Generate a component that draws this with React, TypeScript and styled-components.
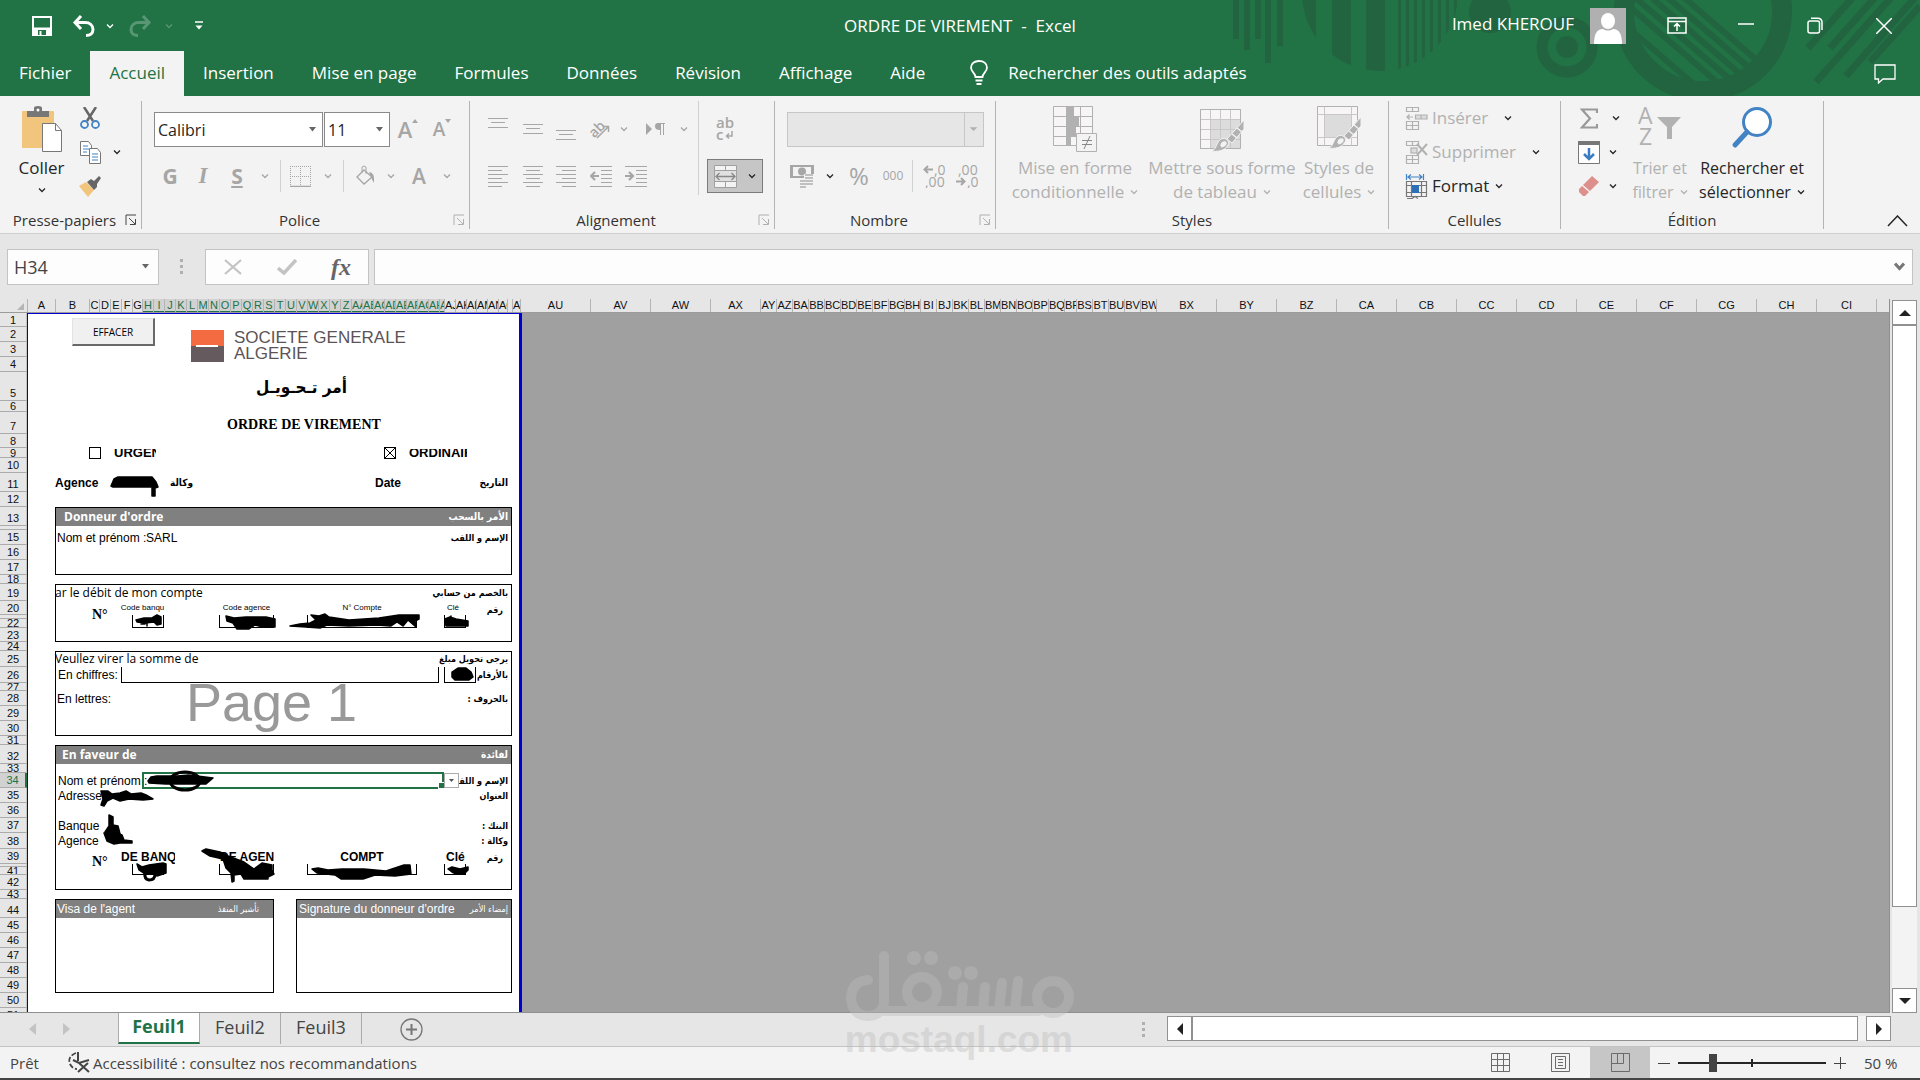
import React from 'react';
import styled, { createGlobalStyle, css } from 'styled-components';

const UI = '"Open Sans", "Noto Sans", sans-serif';
const CELL = '"Liberation Sans", Arial, sans-serif';
const ARABIC = '"DejaVu Sans Condensed", "DejaVu Sans", sans-serif';
const GREEN = '#217346';

const GlobalStyle = createGlobalStyle`
  *, *::before, *::after { box-sizing: border-box; }
  body { margin: 0; font-family: ${UI}; color: #262626; }
  button, input, select { font: inherit; color: inherit; margin: 0; padding: 0; border: 0; background: none; }
  svg { display: block; flex: none; }
`;

const Window = styled.div`
  display: flex;
  flex-direction: column;
  height: 100vh;
  overflow: hidden;
  position: relative;
  background: #e6e6e6;
  border-bottom: 2px solid #444;
`;

/* ---------- title bar and tabs ---------- */

const Header = styled.header`
  position: relative;
  background: ${GREEN};
  color: #fff;
  flex: none;
`;

const Pattern = styled.svg`
  position: absolute;
  top: 0;
  right: 0;
`;

const TitleBar = styled.div`
  position: relative;
  display: grid;
  grid-template-columns: 1fr auto 1fr;
  align-items: center;
  height: 51px;
`;

const QuickAccess = styled.div`
  display: flex;
  align-items: center;
  padding-left: 25px;
`;

const DocTitle = styled.h1`
  margin: 0;
  font-size: 17px;
  line-height: 24px;
  font-weight: 400;
  white-space: pre;
`;

const WindowControls = styled.div`
  display: flex;
  align-items: center;
  justify-content: flex-end;
`;

const UserName = styled.span`
  font-size: 17px;
  line-height: 24px;
  margin: 0 16px 4px 0;
`;

const Slot = styled.button<{ $w: number; $h?: number; $faded?: boolean }>`
  display: flex;
  align-items: center;
  justify-content: center;
  width: ${(p) => p.$w}px;
  height: ${(p) => p.$h ?? 34}px;
  flex: none;
  opacity: ${(p) => (p.$faded ? 0.25 : 1)};
`;

const TabRow = styled.nav`
  position: relative;
  display: flex;
  align-items: stretch;
  height: 45px;
  font-size: 17px;
  line-height: 24px;
`;

const Tab = styled.button<{ $active?: boolean }>`
  padding: 0 19px 2px;
  ${(p) => p.$active && css`background: #f3f3f3; color: ${GREEN};`}
`;

const TellMe = styled.button`
  display: flex;
  align-items: center;
  gap: 20px;
  padding: 0 0 2px 26px;
`;

const CommentButton = styled.button`
  margin-left: auto;
  padding-right: 24px;
`;

/* ---------- ribbon ---------- */

const Ribbon = styled.section`
  display: flex;
  height: 138px;
  padding: 5px 0 4px;
  background: #f3f3f3;
  border-bottom: 1px solid #d0d0d0;
  flex: none;
`;

const Group = styled.div<{ $w: number }>`
  display: flex;
  flex-direction: column;
  flex: none;
  width: ${(p) => p.$w}px;
  border-right: 1px solid #b4b4b4;
`;

const GroupBody = styled.div<{ $pad?: number }>`
  display: flex;
  height: 110px;
  padding-left: ${(p) => p.$pad ?? 0}px;
`;

const GroupFooter = styled.div`
  display: flex;
  align-items: center;
  height: 18px;
  padding: 0 4px;
  font-size: 15px;
  color: #333;
`;

const FooterLabel = styled.span`
  flex: 1;
  text-align: center;
`;

const Launcher = styled.button<{ $dim?: boolean }>`
  color: ${(p) => (p.$dim ? '#b0b0b0' : '#444')};
`;

const Rows = styled.div`
  display: flex;
  flex-direction: column;
  gap: 13px;
  padding-top: 11px;
`;

const Row = styled.div`
  display: flex;
  align-items: center;
  height: 34px;
  color: #a6a6a6;
`;

const VerticalRule = styled.i<{ $m: number; $h?: number }>`
  flex: none;
  width: 1px;
  height: ${(p) => p.$h ?? 32}px;
  margin: 0 ${(p) => p.$m}px;
  background: #d0d0d0;
`;

const BigButton = styled.button<{ $w: number; $dim?: boolean; $size?: number }>`
  display: flex;
  flex-direction: column;
  align-items: center;
  flex: none;
  width: ${(p) => p.$w}px;
  padding-top: 5px;
  font-size: ${(p) => p.$size ?? 17}px;
  line-height: 24px;
  white-space: nowrap;
  color: ${(p) => (p.$dim ? '#b1b1b1' : '#262626')};
`;

const BigIcon = styled.span`
  display: flex;
  align-items: flex-start;
  justify-content: center;
  height: 50px;
`;

const WithChevron = styled.span`
  display: flex;
  align-items: center;
  gap: 6px;
`;

const Stack = styled.div<{ $row: number }>`
  display: grid;
  grid-auto-rows: ${(p) => p.$row}px;
  align-content: start;
`;

const StackRow = styled.div`
  display: flex;
  align-items: center;
`;

const CellsButton = styled.button<{ $dim?: boolean; $gap: number }>`
  display: flex;
  align-items: center;
  font-size: 17px;
  line-height: 24px;
  color: ${(p) => (p.$dim ? '#b1b1b1' : '#262626')};
  span { margin: 0 ${(p) => p.$gap}px 0 4px; }
`;

const SelectFrame = styled.span<{ $w: number; $dim?: boolean }>`
  display: grid;
  grid-template-columns: 1fr 19px;
  align-items: center;
  justify-items: center;
  width: ${(p) => p.$w}px;
  height: 35px;
  background: ${(p) => (p.$dim ? '#e6e6e6' : '#fff')};
  border: 1px solid ${(p) => (p.$dim ? '#c6c6c6' : '#8a8a8a')};
  color: ${(p) => (p.$dim ? '#b1b1b1' : '#666')};
  svg { grid-area: 1 / 2; pointer-events: none; }
`;

const Select = styled.select`
  appearance: none;
  grid-area: 1 / 1 / 2 / 3;
  width: 100%;
  height: 33px;
  padding: 2px 0 0 3px;
  font-size: 16px;
  color: #262626;
  outline: none;
`;

const DividedSelect = styled(SelectFrame)`
  svg { width: 19px; height: 33px; border-left: 1px solid #c6c6c6; }
`;

const Glyph = styled.span<{ $size: number; $weight?: number; $italic?: boolean; $underline?: boolean; $serif?: boolean }>`
  font-size: ${(p) => p.$size}px;
  line-height: 24px;
  font-family: ${(p) => (p.$serif ? '"Liberation Serif", serif' : UI)};
  font-weight: ${(p) => p.$weight ?? 400};
  font-style: ${(p) => (p.$italic ? 'italic' : 'normal')};
  text-decoration: ${(p) => (p.$underline ? 'underline' : 'none')};
`;

const MergeButton = styled.button`
  display: flex;
  align-items: center;
  justify-content: space-around;
  width: 56px;
  height: 34px;
  background: #c6c6c6;
  border: 1px solid #7b7b7b;
  color: #262626;
`;

const CollapseArea = styled.div`
  display: flex;
  flex: 1;
  align-items: flex-end;
  justify-content: flex-end;
  padding: 0 12px 2px 0;
`;

/* ---------- formula bar ---------- */

const FormulaBar = styled.div`
  display: flex;
  align-items: center;
  height: 65px;
  padding: 0 7px;
  flex: none;
`;

const Field = styled.div<{ $w?: number }>`
  display: flex;
  align-items: center;
  height: 36px;
  background: #fdfdfd;
  border: 1px solid #c3c3c3;
  color: #666;
  ${(p) => (p.$w ? `width: ${p.$w}px; flex: none;` : 'flex: 1;')}
`;

const NameInput = styled.input`
  flex: 1;
  min-width: 0;
  padding-left: 6px;
  font-size: 18px;
  color: #444;
  outline: none;
`;

const FormulaInput = styled.input`
  flex: 1;
  height: 32px;
  outline: none;
`;

const Dots = styled.span`
  display: grid;
  align-self: center;
  gap: 3px;
  margin: 0 22px 0 21px;
  i { width: 3px; height: 3px; background: #b0b0b0; }
`;

/* ---------- worksheet ---------- */

const Workspace = styled.main`
  display: flex;
  flex: 1;
  min-height: 0;
`;

const Sheet = styled.div`
  display: flex;
  flex-direction: column;
  flex: 1;
  min-width: 0;
  border-right: 1px solid #8f8f8f;
  border-bottom: 1px solid #8f8f8f;
`;

const ColumnHeads = styled.div`
  display: flex;
  height: 14px;
  flex: none;
  font: 11px/13px ${CELL};
  color: #111;
  border-bottom: 1px solid #9b9b9b;
`;

const Corner = styled.button`
  display: flex;
  align-items: flex-end;
  justify-content: flex-end;
  width: 28px;
  padding: 0 3px 2px 0;
  flex: none;
  color: #b5b5b5;
  border-right: 1px solid #b5b5b5;
`;

const ColumnHead = styled.div<{ $w: number; $on?: boolean }>`
  flex: none;
  width: ${(p) => p.$w}px;
  overflow: hidden;
  text-align: center;
  border-right: 1px solid #b5b5b5;
  ${(p) => p.$on && css`background: #d2d2d2; color: ${GREEN}; box-shadow: inset 0 -1px ${GREEN};`}
`;

const SheetBody = styled.div`
  display: flex;
  flex: 1;
  min-height: 0;
  overflow: hidden;
  background: #a0a0a0;
`;

const RowHeads = styled.div`
  width: 27px;
  flex: none;
  background: #e6e6e6;
  font: 11px/12px ${CELL};
  color: #111;
`;

const RowHead = styled.div<{ $h: number; $on?: boolean }>`
  display: flex;
  align-items: ${(p) => (p.$h > 16 ? 'flex-end' : 'center')};
  justify-content: center;
  height: ${(p) => p.$h}px;
  padding-bottom: ${(p) => (p.$h > 16 ? 1 : 0)}px;
  overflow: hidden;
  border-bottom: 1px solid #ababab;
  border-right: 1px solid #c3c3c3;
  ${(p) => p.$on && css`background: #d2d2d2; color: ${GREEN}; border-right: 2px solid ${GREEN};`}
`;

const rowHeights = [
  14, 15, 15, 15, 29, 11, 22, 14, 10, 15, 19, 15, 19, 4, 15, 15, 15, 9, 17, 14, 4, 9, 14, 9, 16, 16, 8, 15, 15, 15, 9,
  19, 9, 15, 15, 15, 15, 16, 15, 3, 8, 15, 9, 19, 15, 15, 15, 15, 15, 15, 15,
];

const sheetRows = rowHeights.map((h, i) => `${i === 0 ? h - 1 : h}px`).join(' ');

const Page = styled.div`
  position: relative;
  display: grid;
  flex: none;
  align-content: start;
  grid-template-columns: 27px 34px 10px 11px 11px 11px 10px repeat(19, 11px) repeat(8, 11px) 5px 11px 11px 10px 11px 11px 9px 5px 7px;
  grid-template-rows: ${sheetRows};
  background: #fff;
  border: solid #0000d0;
  border-width: 1px 3px 0 1px;
  font: 12px/14px ${CELL};
  color: #000;
`;

type Area = { $r: string; $c: string };

const area = css<Area>`
  grid-row: ${(p) => p.$r};
  grid-column: ${(p) => p.$c};
`;

const Box = styled.div<Area & { $open?: boolean }>`
  ${area}
  border: 1px solid #000;
  ${(p) => p.$open && 'border-top: 0;'}
`;

const Band = styled.div<Area>`
  ${area}
  background: #808080;
  border: 1px solid #000;
  border-bottom: 0;
`;

const Cell = styled.div<Area & { $size?: number; $bold?: boolean; $ui?: boolean; $white?: boolean; $center?: boolean; $pad?: number; $clip?: boolean }>`
  ${area}
  display: flex;
  align-items: center;
  justify-content: ${(p) => (p.$center ? 'center' : 'flex-start')};
  padding-left: ${(p) => p.$pad ?? 0}px;
  font-size: ${(p) => p.$size ?? 12}px;
  font-weight: ${(p) => (p.$bold ? 700 : 400)};
  font-family: ${(p) => (p.$ui ? UI : CELL)};
  color: ${(p) => (p.$white ? '#fff' : '#000')};
  white-space: nowrap;
  overflow: ${(p) => (p.$clip ? 'hidden' : 'visible')};
  z-index: 1;
`;

const ArabicCell = styled.div<Area & { $size?: number; $white?: boolean; $light?: boolean }>`
  ${area}
  display: flex;
  align-items: center;
  justify-content: flex-start;
  direction: rtl;
  padding-right: 4px;
  font: ${(p) => (p.$light ? 400 : 700)} ${(p) => p.$size ?? 9}px/14px ${ARABIC};
  color: ${(p) => (p.$white ? '#fff' : '#000')};
  white-space: nowrap;
  z-index: 1;
`;

const SerifCell = styled(Cell)`
  font-family: 'Liberation Serif', 'Times New Roman', serif;
`;

const ClearButton = styled.button`
  grid-row: 1 / 4;
  grid-column: 2 / 10;
  align-self: start;
  width: 83px;
  height: 28px;
  margin: 4px 0 0 17px;
  font: 10px/14px ${UI};
  background: #f0f0f0;
  border: 1px solid #e3e3e3;
  border-right: 2px solid #696969;
  border-bottom: 2px solid #696969;
`;

const BankLogo = styled.div`
  grid-row: 1 / 5;
  grid-column: 11 / 35;
  display: flex;
  align-items: center;
  gap: 10px;
  padding: 5px 0 0 16px;
  font: 17px/16px ${CELL};
  color: #5c5356;
  white-space: nowrap;
`;

const Tick = styled.label<Area>`
  ${area}
  display: flex;
  align-items: center;
  gap: 13px;
  overflow: visible;
  input {
    appearance: none;
    flex: none;
    width: 12px;
    height: 12px;
    border: 1px solid #000;
  }
  input:checked {
    background: linear-gradient(45deg, transparent 46%, #000 46%, #000 54%, transparent 54%),
      linear-gradient(-45deg, transparent 46%, #000 46%, #000 54%, transparent 54%);
  }
`;

const Cropped = styled.span<{ $w: number }>`
  width: ${(p) => p.$w}px;
  height: 8px;
  overflow: hidden;
  white-space: nowrap;
  font-size: 13px;
  font-weight: 700;
  line-height: 8px;
`;

const PageMark = styled.div`
  grid-row: 26 / 31;
  grid-column: 12 / 30;
  display: flex;
  align-items: center;
  font: 54px/54px ${CELL};
  color: #999;
  white-space: nowrap;
`;

const Selection = styled.div`
  grid-row: 34;
  grid-column: 8 / 36;
  margin: -1px 0;
  border: 2px solid ${GREEN};
  z-index: 1;
`;

const CellDropdown = styled.button`
  grid-row: 34;
  grid-column: 36 / 39;
  display: flex;
  align-items: center;
  justify-content: center;
  width: 15px;
  height: 15px;
  background: #fff;
  border: 1px solid #ababab;
  color: #555;
  z-index: 2;
`;

const Handle = styled.i`
  grid-row: 34;
  grid-column: 35;
  align-self: end;
  width: 6px;
  height: 5px;
  background: ${GREEN};
  outline: 1px solid #fff;
  z-index: 1;
`;

const Ink = styled.svg`
  position: absolute;
  top: -1px;
  left: -1px;
  z-index: 3;
  pointer-events: none;
`;

const VScroll = styled.div`
  display: flex;
  flex-direction: column;
  width: 25px;
  margin: 1px 3px 0 2px;
  flex: none;
  background: #f3f3f3;
`;

const ScrollButton = styled.button`
  display: flex;
  align-items: center;
  justify-content: center;
  width: 25px;
  height: 25px;
  flex: none;
  background: #fff;
  border: 1px solid #919191;
  color: #222;
`;

const Thumb = styled.div<{ $grow: number }>`
  flex: ${(p) => p.$grow} 0 0;
  background: #fff;
  border: 1px solid #919191;
`;

const Rest = styled.div<{ $grow: number }>`
  flex: ${(p) => p.$grow} 0 0;
`;

/* ---------- sheet tabs and status ---------- */

const SheetBar = styled.div`
  display: flex;
  align-items: flex-start;
  height: 34px;
  flex: none;
  border-bottom: 1px solid #c3c3c3;
`;

const SheetNav = styled.div`
  display: flex;
  align-items: center;
  width: 118px;
  height: 32px;
  padding-left: 15px;
  color: #c3c3c3;
`;

const SheetTab = styled.button<{ $active?: boolean }>`
  width: ${(p) => (p.$active ? 82 : 81)}px;
  height: 31px;
  padding-bottom: 3px;
  font-size: 18px;
  line-height: 24px;
  color: #444;
  ${(p) =>
    p.$active
      ? css`background: #fff; color: ${GREEN}; font-weight: 700; border-bottom: 2px solid ${GREEN}; border-left: 1px solid #ababab; border-right: 1px solid #ababab;`
      : css`border-right: 1px solid #ababab;`}
`;

const AddSheet = styled.button`
  margin: 5px 0 0 38px;
`;

const HScroll = styled.div`
  display: flex;
  height: 25px;
  margin: 3px 29px 0 0;
  background: #f3f3f3;
  width: 38%;
  max-width: 724px;
`;

const StatusBar = styled.footer`
  display: flex;
  align-items: center;
  height: 31px;
  flex: none;
  padding-left: 10px;
  background: #f3f3f3;
  color: #444;
  font-size: 15px;
`;

const StatusText = styled.span`
  width: 58px;
`;

const Accessibility = styled.button`
  display: flex;
  align-items: center;
  gap: 3px;
`;

const ViewButton = styled.button<{ $active?: boolean }>`
  display: flex;
  align-items: center;
  justify-content: center;
  width: 60px;
  height: 31px;
  color: #6b6b6b;
  background: ${(p) => (p.$active ? '#c6c6c6' : 'none')};
`;

const Zoom = styled.div`
  display: flex;
  align-items: center;
  width: 270px;
  padding-left: 8px;
`;

const ZoomRange = styled.input`
  appearance: none;
  width: 148px;
  height: 18px;
  margin: 0 8px;
  background: linear-gradient(#262626, #262626) center / 100% 2px no-repeat,
    linear-gradient(#262626, #262626) center / 2px 8px no-repeat;
  &::-webkit-slider-thumb {
    appearance: none;
    width: 8px;
    height: 18px;
    background: #444;
  }
`;

const Percent = styled.span`
  margin-left: 18px;
`;

const Spacer = styled.div`
  flex: 1;
`;

const Watermark = styled.div`
  position: absolute;
  left: 44%;
  bottom: 20px;
  width: 232px;
  opacity: 0.4;
  color: #bdbdbd;
  font: 700 37px/36px ${CELL};
  pointer-events: none;
`;

/* ---------- icons ---------- */

const Svg = ({ w, h, children, ...rest }: { w: number; h: number; children: React.ReactNode } & React.SVGProps<SVGSVGElement>) => (
  <svg width={w} height={h} viewBox={`0 0 ${w} ${h}`} fill="none" stroke="currentColor" aria-hidden="true" {...rest}>
    {children}
  </svg>
);

const Chevron = ({ color = 'currentColor' }: { color?: string }) => (
  <Svg w={8} h={6} stroke={color}><path d="M1 1.5l3 3 3-3" strokeWidth="1.3" /></Svg>
);

const Caret = () => (
  <Svg w={9} h={5} stroke="none" fill="currentColor"><path d="M1 0h7L4.500 4.500z" /></Svg>
);

const LaunchIcon = () => (
  <Svg w={12} h={12}><path d="M1 11V1h10M4 4l6 6M10.500 5v5.500H5" /></Svg>
);

const Triangle = ({ d, w = 12, h = 12 }: { d: string; w?: number; h?: number }) => (
  <Svg w={w} h={h} stroke="none" fill="currentColor"><path d={d} /></Svg>
);

const Lines = ({ rows }: { rows: [number, number, number][] }) => (
  <Svg w={20} h={22}>
    {rows.map(([x1, x2, y]) => <path key={y} d={`M${x1} ${y + 0.5}H${x2}`} />)}
  </Svg>
);

const IndentIcon = ({ out }: { out?: boolean }) => (
  <Svg w={22} h={22}>
    <path d="M0 1.500h22M11 5.500h11M11 9.500h11M11 13.500h11M0 21.500h22M11 17.500h11" />
    <path d={out ? 'M9 11H2M5 7l-4 4 4 4' : 'M0 11h7M4 7l4 4-4 4'} strokeWidth="2.200" />
  </Svg>
);

const BrushOver = () => (
  <g>
    <path d="M44 11L27 30l5 4L44 20z" fill="#b1b1b1" stroke="#f3f3f3" />
    <path d="M32 25l5 4M37 19l5 4" stroke="#f3f3f3" strokeWidth="1.500" />
    <path d="M11 42c6-1 5-9 10-12 5-2 9 2 7 6-3 6-11 7-17 6z" fill="#b1b1b1" stroke="#f3f3f3" />
    <path d="M20 36c0-3 5-6 7-3 1 3-2 5-5 6" fill="#f3f3f3" stroke="#b1b1b1" />
  </g>
);

const CellsIcon = ({ kind }: { kind: 'insert' | 'delete' | 'format' }) => (
  <Svg w={23} h={25} stroke="#b1b1b1" strokeWidth="1.200">
    {kind === 'format' ? (
      <g>
        <path d="M1.500 0v6M18.500 0v6M3 3h14M6 .5L3 3l3 2.500M14 .5L17 3l-3 2.500" stroke="#4183c4" />
        <path d="M1.500 7.500h20v15h-20zM1.500 11.500h20M1.500 18.500h20M6.500 7.500v15M16.500 7.500v15" stroke="#777" />
        <rect x="7" y="11" width="7" height="8" fill="#2f6fb5" stroke="none" />
        <path d="M2 24.500h5l3-2 3 2" stroke="#777" />
      </g>
    ) : (
      <g>
        <path d="M1.500 1.500h12v4h-12zM7.500 1.500v4M1.500 15.500h12v8h-12zM1.500 19.500h12M7.500 15.500v8" />
        {kind === 'insert' ? (
          <path d="M10.500 9h11.500v4H10.500zM16 9v4M8 11H2M4.500 8.500L2 11l2.500 2.500" fill="#dcdcdc" />
        ) : (
          <g><rect x="6" y="8" width="6" height="5" fill="#dcdcdc" /><path d="M12 4l10 11M22 4L12 15" strokeWidth="2" /></g>
        )}
      </g>
    )}
  </Svg>
);

/* ---------- data ---------- */

const letters = 'ABCDEFGHIJKLMNOPQRSTUVWXYZ'.split('');

const columns: { name: string; w: number; on?: boolean }[] = [
  { name: 'A', w: 28 }, { name: 'B', w: 34 }, { name: 'C', w: 10 }, { name: 'D', w: 11 }, { name: 'E', w: 11 },
  { name: 'F', w: 11 }, { name: 'G', w: 10 },
  ...letters.slice(7).map((l) => ({ name: l, w: 11, on: true })),
  ...letters.slice(0, 8).map((l) => ({ name: `A${l}`, w: 11, on: true })),
  { name: 'AI', w: 5, on: true },
  { name: 'AJ', w: 11 }, { name: 'AK', w: 11 }, { name: 'AL', w: 10 }, { name: 'AM', w: 11 }, { name: 'AN', w: 11 },
  { name: 'AO', w: 9 }, { name: '', w: 5 }, { name: 'AT', w: 8 },
  { name: 'AU', w: 70 }, { name: 'AV', w: 60 }, { name: 'AW', w: 60 }, { name: 'AX', w: 50 },
  { name: 'AY', w: 16 }, { name: 'AZ', w: 16 },
  ...letters.slice(0, 23).map((l) => ({ name: `B${l}`, w: l === 'R' ? 12 : 16 })),
  { name: 'BX', w: 60 }, { name: 'BY', w: 60 }, { name: 'BZ', w: 60 },
  ...letters.slice(0, 9).map((l) => ({ name: `C${l}`, w: 60 })),
];

const tabs = ['Fichier', 'Accueil', 'Insertion', 'Mise en page', 'Formules', 'Données', 'Révision', 'Affichage', 'Aide'];

/* ---------- parts ---------- */

const TitleArea = () => (
  <Header>
    <Pattern width="700" height="96" viewBox="1220 0 700 96" fill="#22643f" aria-hidden="true">
      <defs>
        <clipPath id="disc"><circle cx="1380" cy="-7" r="78" /></clipPath>
        <clipPath id="inner"><circle cx="1703" cy="12" r="70" /></clipPath>
      </defs>
      <path d="M1233 0h6v39h-6zM1244 0h6v50h-6zM1255 0h6v39h-6zM1265 0h6v63h-6zM1277 0h6v46h-6z" />
      <g clipPath="url(#disc)">
        <path d="M1300 0h16v40h-16zM1332 0h19v80h-19zM1366 0h19v80h-19z" />
        {[1398, 1406, 1414, 1422, 1430, 1438, 1446, 1454].map((x) => <rect key={x} x={x} y="0" width="3" height="80" />)}
      </g>
      <circle cx="1490" cy="12" r="21" />
      <circle cx="1567" cy="47" r="25" fill="none" stroke="#22643f" strokeWidth="11" />
      <circle cx="1567" cy="47" r="11" />
      <circle cx="1703" cy="12" r="79" fill="none" stroke="#22643f" strokeWidth="20" />
      <g clipPath="url(#inner)" stroke="#22643f" strokeWidth="6">
        <path d="M1610 -10l130 112M1624 -12l130 112M1638 -14l130 112M1652 -16l130 112M1666 -18l130 112M1596 0l130 112" />
      </g>
      <path d="M1808 48l46-52M1830 48l48-54M1816 82l80-90M1846 76l74-84M1870 62l50-56" stroke="#22643f" strokeWidth="7" />
    </Pattern>
    <TitleBar>
      <QuickAccess>
        <Slot $w={34} aria-label="Enregistrer">
          <Svg w={20} h={20} strokeWidth="2"><path d="M1 1h18v18H1zM2 12.500h16" /><path d="M2 12h16v7H2z" fill="#fff" stroke="none" /><path d="M6 14h8v5H6z" fill={GREEN} stroke="none" /><path d="M8.500 15v4" /></Svg>
        </Slot>
        <Slot $w={50} aria-label="Annuler">
          <Svg w={24} h={22} strokeWidth="3"><path d="M9 1L3 7.500 9 14M3 7.500h10c5 0 8 3 8 7s-3 6-7 6" /></Svg>
        </Slot>
        <Slot $w={2} aria-label="Options d'annulation"><Chevron /></Slot>
        <Slot $w={58} $faded aria-label="Rétablir">
          <Svg w={24} h={22} strokeWidth="3"><path d="M15 1l6 6.500-6 6.500M21 7.500H11c-5 0-8 3-8 7s3 6 7 6" /></Svg>
        </Slot>
        <Slot $w={0} $faded aria-label="Options de rétablissement"><Chevron /></Slot>
        <Slot $w={60} aria-label="Personnaliser">
          <Svg w={8} h={9}><path d="M0 1h8" strokeWidth="1.500" /><path d="M.5 4.500h7L4 8.500z" fill="#fff" stroke="none" /></Svg>
        </Slot>
      </QuickAccess>
      <DocTitle>{'ORDRE DE VIREMENT  -  Excel'}</DocTitle>
      <WindowControls>
        <UserName>Imed KHEROUF</UserName>
        <Svg w={36} h={36} stroke="none"><path d="M0 0h36v36H0z" fill="#b0b0b0" /><ellipse cx="18" cy="13" rx="7" ry="8" fill="#fff" /><path d="M4 36c0-10 3-15 9-15 3 2 7 2 10 0 6 0 9 5 9 15z" fill="#fff" /></Svg>
        <Slot $w={102} aria-label="Options du ruban"><Svg w={20} h={17} strokeWidth="1.500"><path d="M1 1h18v15H1zM1 4.500h18M10 14V7M7 9.500L10 6.500l3 3" /></Svg></Slot>
        <Slot $w={36} aria-label="Réduire"><Svg w={16} h={16} strokeWidth="1.500"><path d="M0 6h16" /></Svg></Slot>
        <Slot $w={102} aria-label="Restaurer"><Svg w={16} h={17} strokeWidth="1.500"><rect x="1" y="4" width="11.500" height="12" rx="2" /><path d="M4 1.200h7a4 4 0 0 1 4 4V13" /></Svg></Slot>
        <Slot $w={36} aria-label="Fermer"><Svg w={16} h={16} strokeWidth="1.500"><path d="M0 0l16 16M16 0L0 16" /></Svg></Slot>
        <Slot $w={18} as="span" />
      </WindowControls>
    </TitleBar>
    <TabRow>
      {tabs.map((t) => <Tab key={t} $active={t === 'Accueil'}>{t}</Tab>)}
      <TellMe>
        <Svg w={18} h={25} strokeWidth="1.800"><path d="M5.500 17c0-4-4.500-5-4.500-9.500C1 3.500 4.500 1 9 1s8 2.500 8 6.500c0 4.500-4.500 5.500-4.500 9.500zM5.500 20.500h7M6.500 24h5" /></Svg>
        Rechercher des outils adaptés
      </TellMe>
      <CommentButton aria-label="Commentaires">
        <Svg w={22} h={20} strokeWidth="1.300"><path d="M1 1h20v14H9l-4.500 4v-4H1z" /></Svg>
      </CommentButton>
    </TabRow>
  </Header>
);

const Footer = ({ label, launcher, dim }: { label: string; launcher?: boolean; dim?: boolean }) => (
  <GroupFooter>
    <FooterLabel>{label}</FooterLabel>
    {launcher && <Launcher $dim={dim} aria-label={`${label} : options`}><LaunchIcon /></Launcher>}
  </GroupFooter>
);

const RibbonArea = () => (
  <Ribbon>
    <Group $w={142}>
      <GroupBody $pad={5}>
        <BigButton $w={73}>
          <BigIcon>
            <Svg w={42} h={46} stroke="none">
              <path d="M1 6q0-1 1-1h30q1 0 1 1v36H1z" fill="#f2c57c" />
              <path d="M6 5h7V2q0-2 4-2t4 2v3h7v6H6z" fill="#777" /><circle cx="17" cy="4" r="1.500" fill="#fff" />
              <path d="M21.500 17.500h13l6 7v21h-19z" fill="#fff" stroke="#777" /><path d="M34.500 17.500v7h6" stroke="#777" fill="none" />
            </Svg>
          </BigIcon>
          <span>Coller</span>
          <Svg w={8} h={20}><path d="M1 8.500l3 3 3-3" strokeWidth="1.300" /></Svg>
        </BigButton>
        <Stack $row={34}>
          <StackRow><Slot $w={24} aria-label="Couper">
            <Svg w={20} h={22} strokeWidth="2.500"><path d="M4 0l9 14M16 0L7 14" stroke="#666" /><circle cx="4.500" cy="17.500" r="3.500" stroke="#4183c4" strokeWidth="1.800" /><circle cx="15.500" cy="17.500" r="3.500" stroke="#4183c4" strokeWidth="1.800" /></Svg>
          </Slot></StackRow>
          <StackRow>
            <Slot $w={24} aria-label="Copier"><Svg w={21} h={23} stroke="#777"><path d="M.5.5h8l3 4v10H.5z" fill="#fff" /><path d="M3 5h5M3 8h6M3 11h4" stroke="#4183c4" /><path d="M9.500 7.500h8l3 4v11h-11z" fill="#fff" /><path d="M12 13h6M12 16h6M12 19h6" stroke="#4183c4" /></Svg></Slot>
            <Slot $w={30} aria-label="Options de copie"><Chevron /></Slot>
          </StackRow>
          <StackRow><Slot $w={24} aria-label="Reproduire la mise en forme">
            <Svg w={22} h={21} stroke="none"><path d="M0 10l7-4 8 8-6 7z" fill="#f2c57c" /><path d="M8 6l4-3 3 2 5-5 2 2-4 6v3l-3 3z" fill="#666" /></Svg>
          </Slot></StackRow>
        </Stack>
      </GroupBody>
      <Footer label="Presse-papiers" launcher />
    </Group>

    <Group $w={328}>
      <GroupBody $pad={12}>
        <Rows>
          <Row>
            <SelectFrame $w={169}><Select aria-label="Police" defaultValue="Calibri"><option>Calibri</option></Select><Caret /></SelectFrame>
            <VerticalRule $m={0} $h={0} />
            <SelectFrame $w={66}><Select aria-label="Taille" defaultValue="11"><option>11</option></Select><Caret /></SelectFrame>
            <Slot $w={36} aria-label="Agrandir"><Glyph $size={22} $weight={600}>A</Glyph><Svg w={6} h={20} stroke="none" fill="currentColor"><path d="M0 4l3-4 3 4z" /></Svg></Slot>
            <Slot $w={32} aria-label="Réduire la police"><Glyph $size={19} $weight={600}>A</Glyph><Svg w={6} h={20} stroke="none" fill="currentColor"><path d="M0 0l3 4 3-4z" /></Svg></Slot>
          </Row>
          <Row>
            <Slot $w={32}><Glyph $size={21} $weight={700}>G</Glyph></Slot>
            <Slot $w={34}><Glyph $size={23} $weight={700} $italic $serif>I</Glyph></Slot>
            <Slot $w={34}><Glyph $size={21} $weight={700} $underline>S</Glyph></Slot>
            <Slot $w={22} aria-label="Soulignement"><Chevron /></Slot>
            <VerticalRule $m={4} />
            <Slot $w={31} aria-label="Bordures"><Svg w={21} h={21}><path d="M.5 0v20M20.500 0v20M10.500 0v20M0 .5h21M0 10.500h21" strokeDasharray="1 1" /><path d="M0 20.500h21" strokeWidth="1.500" /></Svg></Slot>
            <Slot $w={24} aria-label="Options de bordure"><Chevron /></Slot>
            <VerticalRule $m={3} />
            <Slot $w={37} aria-label="Remplissage"><Svg w={20} h={22}><path d="M8 5l8 7-8 7-7-7z" strokeWidth="1.300" /><path d="M6 8V2q2-2 4 0v7" /><path d="M13 7q6 0 5 11-2-3-3-6z" fill="currentColor" stroke="none" /></Svg></Slot>
            <Slot $w={14} aria-label="Options de remplissage"><Chevron /></Slot>
            <Slot $w={42}><Glyph $size={21} $weight={600}>A</Glyph></Slot>
            <Slot $w={14} aria-label="Couleur de police"><Chevron /></Slot>
          </Row>
        </Rows>
      </GroupBody>
      <Footer label="Police" launcher dim />
    </Group>

    <Group $w={305}>
      <GroupBody $pad={10}>
        <Rows>
          <Row>
            <Slot $w={36} aria-label="Aligner en haut"><Lines rows={[[0, 20, 0], [3, 17, 4], [0, 20, 9]]} /></Slot>
            <Slot $w={33} aria-label="Aligner au centre"><Lines rows={[[0, 20, 6], [3, 17, 10], [0, 20, 15]]} /></Slot>
            <Slot $w={34} aria-label="Aligner en bas"><Lines rows={[[0, 20, 12], [3, 17, 16], [0, 20, 21]]} /></Slot>
            <Slot $w={34} aria-label="Orientation">
              <Svg w={22} h={22}><text x="0" y="16" fontSize="14" fontWeight="600" fontFamily="Open Sans" fill="currentColor" stroke="none" transform="rotate(-45 8 12)">ab</text><path d="M8 20L19 9M14 8.500h5.500V14" strokeWidth="1.500" /></Svg>
            </Slot>
            <Slot $w={14} aria-label="Options d'orientation"><Chevron /></Slot>
            <Slot $w={47} aria-label="Sens du texte">
              <Svg w={20} h={14} stroke="none" fill="currentColor"><path d="M1 1l6 6-6 6zM13 1h7v1h-1v11h-1V2h-2v11h-1V8c-3 0-5-1-5-3.500S11 1 13 1z" /></Svg>
            </Slot>
            <Slot $w={12} aria-label="Options de sens"><Chevron /></Slot>
          </Row>
          <Row>
            <Slot $w={36} aria-label="Gauche"><Lines rows={[[0, 20, 1], [0, 14, 5], [0, 20, 9], [0, 14, 13], [0, 20, 17], [0, 14, 21]]} /></Slot>
            <Slot $w={33} aria-label="Centre"><Lines rows={[[0, 20, 1], [3, 17, 5], [0, 20, 9], [3, 17, 13], [0, 20, 17], [3, 17, 21]]} /></Slot>
            <Slot $w={34} aria-label="Droite"><Lines rows={[[0, 20, 1], [6, 20, 5], [0, 20, 9], [6, 20, 13], [0, 20, 17], [6, 20, 21]]} /></Slot>
            <Slot $w={36} aria-label="Diminuer le retrait"><IndentIcon out /></Slot>
            <Slot $w={34} aria-label="Augmenter le retrait"><IndentIcon /></Slot>
          </Row>
        </Rows>
        <VerticalRule $m={8} $h={94} />
        <Rows>
          <Row>
            <Slot $w={36} aria-label="Renvoyer à la ligne">
              <Svg w={20} h={24} stroke="none" fill="currentColor"><text x="1" y="11" fontSize="15" fontWeight="600" fontFamily="Open Sans">ab</text><text x="1" y="23" fontSize="15" fontWeight="600" fontFamily="Open Sans">c</text><path d="M17 14v5h-5M14 16.500L11.500 19l2.500 2.500" stroke="currentColor" strokeWidth="1.500" fill="none" /></Svg>
            </Slot>
          </Row>
          <Row>
            <MergeButton aria-label="Fusionner et centrer">
              <Svg w={23} h={23} stroke="#a0a0a0"><path d="M.5.500h22v22H.5z" fill="#f3f3f3" /><path d="M.5 5.500h22v11H.5z" fill="#e0e0e0" /><path d="M11.500 0v5M11.500 17v5" /><path d="M2 11.500h19M5.500 8L2 11.500 5.500 15M17.500 8l3.500 3.500-3.500 3.500" stroke="#888" strokeWidth="1.300" /></Svg>
              <Chevron />
            </MergeButton>
          </Row>
        </Rows>
      </GroupBody>
      <Footer label="Alignement" launcher dim />
    </Group>

    <Group $w={221}>
      <GroupBody $pad={12}>
        <Rows>
          <Row>
            <DividedSelect $w={197} $dim>
              <Select aria-label="Format de nombre" disabled />
              <svg viewBox="0 0 19 33" fill="currentColor" aria-hidden="true"><path d="M5 14h8l-4 4z" /></svg>
            </DividedSelect>
          </Row>
          <Row>
            <Slot $w={30} aria-label="Format monétaire">
              <Svg w={24} h={24} stroke="none" fill="#a6a6a6"><path d="M0 1h24v13H0z" /><path d="M3 3h18v9H3z" fill="#f3f3f3" /><circle cx="12" cy="7.500" r="4" /><path d="M14 10h10v13H9v-8h5z" fill="#f3f3f3" /><path d="M15 11h8M15 14h8M15 17h8M10 17h6M10 20h13M10 23h6" stroke="#c0c0c0" strokeWidth="2" /></Svg>
            </Slot>
            <Slot $w={26} aria-label="Options monétaires"><Chevron color="#262626" /></Slot>
            <Slot $w={32}><Glyph $size={24}>%</Glyph></Slot>
            <Slot $w={36}><Glyph $size={12}>000</Glyph></Slot>
            <VerticalRule $m={1} />
            <Slot $w={40} aria-label="Ajouter une décimale">
              <Svg w={22} h={24} stroke="none" fill="currentColor"><path d="M10 5.500H2M5 2L1.500 5.500 5 9" fill="none" stroke="currentColor" strokeWidth="2" /><text x="11" y="11" fontSize="14" fontFamily="Open Sans">,0</text><text x="2" y="23" fontSize="14" fontFamily="Open Sans">,00</text></Svg>
            </Slot>
            <Slot $w={26} aria-label="Réduire les décimales">
              <Svg w={22} h={24} stroke="none" fill="currentColor"><path d="M0 17.500h8M5 14l3.500 3.500L5 21" fill="none" stroke="currentColor" strokeWidth="2" /><text x="2" y="11" fontSize="14" fontFamily="Open Sans">,00</text><text x="11" y="23" fontSize="14" fontFamily="Open Sans">,0</text></Svg>
            </Slot>
          </Row>
        </Rows>
      </GroupBody>
      <Footer label="Nombre" launcher dim />
    </Group>

    <Group $w={393}>
      <GroupBody $pad={8}>
        <BigButton $w={142} $dim>
          <BigIcon><Svg w={44} h={46} stroke="#b1b1b1"><path d="M.5.500h39v39H.5zM.5 10.500h39M.5 20.500h39M.5 30.500h39M13.500.500v39M27.500.500v39" fill="#f8f5f7" /><path d="M13 1h8v9h-8zM13 11h13v9H13zM13 21h10v9H13zM13 31h5v8h-5z" fill="#b1b1b1" stroke="none" /><path d="M23.500 27.500h20v18h-20z" fill="#f3f3f3" /><path d="M29 34.500h10M29 38.500h10M37 30l-6 13" stroke="#888" /></Svg></BigIcon>
          <span>Mise en forme</span>
          <WithChevron>conditionnelle <Chevron /></WithChevron>
        </BigButton>
        <BigButton $w={152} $dim>
          <BigIcon><Svg w={44} h={48} stroke="#b1b1b1"><path d="M.5 3.500h40v39H.5z" fill="#f8f5f7" /><path d="M11 13h30v30H11z" fill="#dcdcdc" stroke="none" /><path d="M.5 13.500h40M.5 23.500h40M.5 33.500h40M10.500 3.500v39M20.500 3.500v39M30.500 3.500v39" stroke="#c8c8c8" /><path d="M.5 3.500h40v39H.5z" /><g transform="translate(0 3)"><BrushOver /></g></Svg></BigIcon>
          <span>Mettre sous forme</span>
          <WithChevron>de tableau <Chevron /></WithChevron>
        </BigButton>
        <BigButton $w={82} $dim>
          <BigIcon><Svg w={44} h={46} stroke="#b1b1b1"><path d="M.5.500h40v39H.5z" fill="#f8f5f7" /><path d="M7 9h27v22H7z" fill="#dcdcdc" stroke="none" /><path d="M.5 8.500h40M.5 31.500h40M7.500.500v39M34.500.500v39" stroke="#c8c8c8" /><BrushOver /></Svg></BigIcon>
          <span>Styles de</span>
          <WithChevron>cellules <Chevron /></WithChevron>
        </BigButton>
      </GroupBody>
      <Footer label="Styles" />
    </Group>

    <Group $w={172}>
      <GroupBody $pad={16}>
        <Stack $row={34}>
          <CellsButton $dim $gap={16}><CellsIcon kind="insert" /><span>Insérer</span><Chevron color="#262626" /></CellsButton>
          <CellsButton $dim $gap={16}><CellsIcon kind="delete" /><span>Supprimer</span><Chevron color="#262626" /></CellsButton>
          <CellsButton $gap={6}><CellsIcon kind="format" /><span>Format</span><Chevron /></CellsButton>
        </Stack>
      </GroupBody>
      <Footer label="Cellules" />
    </Group>

    <Group $w={263}>
      <GroupBody $pad={14}>
        <Stack $row={34}>
          <StackRow>
            <Slot $w={28} aria-label="Somme"><Svg w={18} h={21} strokeWidth="2.200" stroke="#999"><path d="M17 5V1.500H2l8 9-8 9h15V16" /></Svg></Slot>
            <Slot $w={26} aria-label="Options de somme"><Chevron /></Slot>
          </StackRow>
          <StackRow>
            <Slot $w={28} aria-label="Remplir"><Svg w={22} h={23}><path d="M.5.500h21v22H.5z" fill="#fff" stroke="#777" /><path d="M0 0h22v4H0z" fill="#777" stroke="none" /><path d="M11 7v11M6 13l5 5 5-5" stroke="#3a7cc2" strokeWidth="2.500" /></Svg></Slot>
            <Slot $w={20} aria-label="Options de remplissage"><Chevron /></Slot>
          </StackRow>
          <StackRow>
            <Slot $w={28} aria-label="Effacer"><Svg w={22} h={20} stroke="none" fill="#dd8f8b"><path d="M14 0l7 6-9 9-7-6zM4 10l7 6-4 4H5l-4-4v-3z" /></Svg></Slot>
            <Slot $w={20} aria-label="Options d'effacement"><Chevron /></Slot>
          </StackRow>
        </Stack>
        <BigButton $w={62} $size={16} $dim>
          <BigIcon>
            <Svg w={44} h={42} stroke="none" fill="#b1b1b1"><text x="0" y="18" fontSize="23" fontFamily="Open Sans">A</text><text x="1" y="39" fontSize="23" fontFamily="Open Sans">Z</text><path d="M19 11h24l-9 10v12h-5V21z" /></Svg>
          </BigIcon>
          <span>Trier et</span>
          <WithChevron>filtrer <Chevron /></WithChevron>
        </BigButton>
        <BigButton $w={122} $size={16}>
          <BigIcon>
            <Svg w={42} h={44}><circle cx="26" cy="16" r="13.500" fill="#fff" stroke="#4183c4" strokeWidth="3" /><path d="M16 26L4 39" stroke="#4183c4" strokeWidth="5" strokeLinecap="round" /></Svg>
          </BigIcon>
          <span>Rechercher et</span>
          <WithChevron>sélectionner <Chevron /></WithChevron>
        </BigButton>
      </GroupBody>
      <Footer label="Édition" />
    </Group>
    <CollapseArea>
      <button aria-label="Réduire le ruban"><Svg w={21} h={12} strokeWidth="1.500"><path d="M1 11l9.500-10L20 11" /></Svg></button>
    </CollapseArea>
  </Ribbon>
);

const FormulaArea = () => (
  <FormulaBar>
    <Field $w={152}>
      <NameInput aria-label="Zone Nom" defaultValue="H34" />
      <Slot $w={26} $h={30} aria-label="Liste des noms"><Caret /></Slot>
    </Field>
    <Dots><i /><i /><i /></Dots>
    <Field $w={164}>
      <Slot $w={54} aria-label="Annuler la saisie"><Svg w={18} h={16} stroke="#c3c3c3" strokeWidth="2.200"><path d="M1 1l16 14M17 1L1 15" /></Svg></Slot>
      <Slot $w={54} aria-label="Valider"><Svg w={20} h={16} stroke="#c3c3c3" strokeWidth="3.500"><path d="M1 9l6 5L19 1" /></Svg></Slot>
      <Slot $w={54}><Glyph $size={24} $italic $weight={700} $serif>fx</Glyph></Slot>
    </Field>
    <VerticalRule $m={2} $h={0} />
    <Field>
      <FormulaInput aria-label="Barre de formule" />
      <Slot $w={26} aria-label="Développer"><Svg w={11} h={9} stroke="#777" strokeWidth="3"><path d="M1 1.500l4.500 5 4.500-5" /></Svg></Slot>
    </Field>
  </FormulaBar>
);

const Scribbles = () => (
  <Ink width="494" height="699" viewBox="27 313 494 699" fill="#000" stroke="#000" strokeWidth="1.500" strokeLinecap="round" strokeLinejoin="round" aria-hidden="true">
    <path d="M111 486l3-7 4-2h34l4 5 2 5-3 1v8h-3v-9h-39z" />
    <path d="M136 620l8-2h8l5-3 4 2v7l-4 1-3-3-9 1-8-1zM141 624h4M147 622v4" />
    <path d="M226 616l8 2 12-1 20 0 9 2v8h-12l-8-2-6 4h-12l-4-6-6-2z" />
    <path d="M300 624l10-1 6-3-5-5 8 1 6-2 4 3 20 3 30-2 20-3h20v4l-4 2 1 6-8-7-5 6-6-4-6 4-14-1-28 1-22-1-7 3-14-1-16-1z" />
    <path d="M445 619l5-2 6 2 12 2v5h-22zM451 616v8" />
    <path d="M452 672l6-4h8l5 4 2 5-4 3h-14l-3-3z" />
    <path d="M148 781l3-4 6-1h20l12-1 24 3-7 6h-40l-17-1z" />
    <ellipse cx="185" cy="781" rx="15" ry="9" fill="none" strokeWidth="3" />
    <path d="M101 791h7l4 3 8-1 6-2 5 3 10-1 5 2 7 4-10 1-14-1-9 2-7-3-6 3-3 5-3-1 2-6z" />
    <path d="M109 815l4 2v8l5 1 2 8-2 2h-9l-4-4 4-6z" />
    <path d="M104 833l10-1 8 3 2 5 8 1v2h-12l-6 1-7-3z" />
    <path d="M137 864l5 3 7-2 14-2 3 1v9l-9 3-3-3-9 1-6-4z" />
    <path d="M145 873q-1 6 4 7 6 0 6-6" fill="none" strokeWidth="3" />
    <path d="M202 851l4-2 14 3 8 4 16 6 10 7 8-6 10 2v5l2 4-6 3v2h-24l-3-5-7 1v6l-2 1-1-9-5-5-3-9-13-3z" />
    <path d="M312 869l6-1 10 2 14-1h22l22 2 18-6 6 0 1 9-16 2-20-1-12 4h-22l-6-4-18-2z" />
    <path d="M448 869l4-2 8 2 8-2v3l-4 4h-8l-4-2z" />
  </Ink>
);

const OrderForm = () => (
  <Page>
    <ClearButton>EFFACER</ClearButton>
    <BankLogo>
      <Svg w={33} h={32} stroke="none"><path d="M0 0h33v16H0z" fill="#f46a41" /><path d="M0 16h33v16H0z" fill="#655b5f" /><path d="M5 15h22v2H5z" fill="#fff" /></Svg>
      <span>SOCIETE GENERALE<br />ALGERIE</span>
    </BankLogo>
    <ArabicCell $r="5" $c="8 / 27" $size={17}>أمر تـحـويـل</ArabicCell>
    <SerifCell $r="6 / 9" $c="8 / 38" $size={14} $bold $center>ORDRE DE VIREMENT</SerifCell>

    <Tick $r="9" $c="3 / 12"><input type="checkbox" /><Cropped $w={42}>URGENT</Cropped></Tick>
    <Tick $r="9" $c="30 / 43"><input type="checkbox" defaultChecked /><Cropped $w={58}>ORDINAIRE</Cropped></Tick>

    <Cell $r="11" $c="2 / 8" $bold>Agence</Cell>
    <ArabicCell $r="11" $c="8 / 13" $size={10}>وكالة</ArabicCell>
    <Cell $r="11" $c="29 / 35" $bold $pad={2}>Date</Cell>
    <ArabicCell $r="11" $c="36 / 43" $size={10}>التاريخ</ArabicCell>

    <Box $r="13 / 18" $c="2 / 43" />
    <Band $r="13" $c="2 / 43" />
    <Cell $r="13" $c="2 / 20" $size={12} $bold $ui $white $pad={9}>Donneur d'ordre</Cell>
    <ArabicCell $r="13" $c="30 / 43" $white $size={10}>الأمر بالسحب</ArabicCell>
    <Cell $r="15" $c="2 / 9" $pad={2}>Nom et prénom :</Cell>
    <Cell $r="15" $c="8 / 16" $pad={4}>SARL</Cell>
    <ArabicCell $r="15" $c="30 / 43">الإسم و اللقب</ArabicCell>

    <Box $r="19 / 24" $c="2 / 43" />
    <Cell $r="19" $c="2 / 20" $ui>ar le débit de mon compte</Cell>
    <ArabicCell $r="19" $c="30 / 43">بالخصم من حسابي</ArabicCell>
    <Cell $r="20" $c="5 / 11" $size={8} $center>Code banqu</Cell>
    <Cell $r="20" $c="14 / 21" $size={8} $center>Code agence</Cell>
    <Cell $r="20" $c="23 / 33" $size={8} $center>N° Compte</Cell>
    <Cell $r="20" $c="36 / 38" $size={8} $pad={3}>Clé</Cell>
    <SerifCell $r="20 / 23" $c="3 / 7" $size={14} $bold $pad={3}>N°</SerifCell>
    <Box $r="21 / 23" $c="7 / 10" $open />
    <Box $r="21 / 23" $c="15 / 20" $open />
    <Box $r="21 / 23" $c="23 / 33" $open />
    <Box $r="21 / 23" $c="36 / 38" $open />
    <ArabicCell $r="20 / 22" $c="38 / 42">رقم</ArabicCell>

    <Box $r="25 / 31" $c="2 / 43" />
    <Cell $r="25" $c="2 / 20" $ui>Veullez virer la somme de</Cell>
    <ArabicCell $r="25" $c="30 / 43">يرجى تحويل مبلغ</ArabicCell>
    <Cell $r="26" $c="2 / 6" $pad={3}>En chiffres:</Cell>
    <Box $r="26" $c="6 / 35" $open />
    <Box $r="26" $c="36 / 39" $open />
    <ArabicCell $r="26" $c="39 / 43">بالأرقام</ArabicCell>
    <Cell $r="28" $c="2 / 8" $pad={2}>En lettres:</Cell>
    <ArabicCell $r="28" $c="30 / 43">بالحروف :</ArabicCell>
    <PageMark>Page 1</PageMark>

    <Box $r="32 / 43" $c="2 / 43" />
    <Band $r="32" $c="2 / 43" />
    <Cell $r="32" $c="2 / 20" $bold $ui $white $pad={7}>En faveur de</Cell>
    <ArabicCell $r="32" $c="30 / 43" $white $size={10}>لفائدة</ArabicCell>
    <Cell $r="34" $c="2 / 9" $pad={3}>Nom et prénom :</Cell>
    <Selection />
    <Handle />
    <CellDropdown aria-label="Choisir un bénéficiaire"><Svg w={5} h={3} stroke="none" fill="currentColor"><path d="M0 0h5L2.500 3z" /></Svg></CellDropdown>
    <ArabicCell $r="34" $c="39 / 43">الإسم و اللقب</ArabicCell>
    <Cell $r="35" $c="2 / 8" $pad={3}>Adresse</Cell>
    <ArabicCell $r="35" $c="30 / 43">العنوان</ArabicCell>
    <Cell $r="37" $c="2 / 8" $pad={3}>Banque</Cell>
    <ArabicCell $r="37" $c="30 / 43">البنك :</ArabicCell>
    <Cell $r="38" $c="2 / 8" $pad={3}>Agence</Cell>
    <ArabicCell $r="38" $c="30 / 43">وكالة :</ArabicCell>
    <Cell $r="39" $c="6 / 11" $bold $center $clip>CODE BANQUE</Cell>
    <Cell $r="39" $c="15 / 20" $bold $center $clip>CODE AGENCE</Cell>
    <Cell $r="39" $c="25 / 31" $bold $center>COMPT</Cell>
    <Cell $r="39" $c="36 / 39" $bold $pad={2}>Clé</Cell>
    <SerifCell $r="39 / 42" $c="3 / 7" $size={14} $bold $pad={3}>N°</SerifCell>
    <Box $r="40 / 42" $c="7 / 10" $open />
    <Box $r="40 / 42" $c="15 / 20" $open />
    <Box $r="40 / 42" $c="23 / 33" $open />
    <Box $r="40 / 42" $c="36 / 38" $open />
    <ArabicCell $r="39 / 41" $c="38 / 42">رقم</ArabicCell>

    <Box $r="44 / 50" $c="2 / 20" />
    <Band $r="44" $c="2 / 20" />
    <Cell $r="44" $c="2 / 12" $white $pad={2}>Visa de l'agent</Cell>
    <ArabicCell $r="44" $c="12 / 19" $white $light>تأشير المنفذ</ArabicCell>
    <Box $r="44 / 50" $c="22 / 43" />
    <Band $r="44" $c="22 / 43" />
    <Cell $r="44" $c="22 / 38" $white $pad={3}>Signature du donneur d'ordre</Cell>
    <ArabicCell $r="44" $c="37 / 43" $white $light>إمضاء الأمر</ArabicCell>
    <Scribbles />
  </Page>
);

const SheetArea = () => (
  <Workspace>
    <Sheet>
      <ColumnHeads>
        <Corner aria-label="Tout sélectionner"><Triangle w={7} h={7} d="M7 0v7H0z" /></Corner>
        {columns.map((c, i) => <ColumnHead key={i} $w={c.w} $on={c.on}>{c.name}</ColumnHead>)}
      </ColumnHeads>
      <SheetBody>
        <RowHeads>
          {rowHeights.map((h, i) => <RowHead key={i} $h={h} $on={i === 33}>{h > 4 ? i + 1 : ''}</RowHead>)}
        </RowHeads>
        <OrderForm />
      </SheetBody>
    </Sheet>
    <VScroll>
      <ScrollButton aria-label="Défiler vers le haut"><Triangle d="M0 9l6-6 6 6z" /></ScrollButton>
      <Thumb $grow={583} />
      <Rest $grow={81} />
      <ScrollButton aria-label="Défiler vers le bas"><Triangle d="M0 3l6 6 6-6z" /></ScrollButton>
    </VScroll>
  </Workspace>
);

const BottomArea = () => (
  <>
    <SheetBar>
      <SheetNav>
        <Slot $w={34} aria-label="Feuille précédente"><Triangle w={7} h={12} d="M7 0v12L0 6z" /></Slot>
        <Slot $w={34} aria-label="Feuille suivante"><Triangle w={7} h={12} d="M0 0v12l7-6z" /></Slot>
      </SheetNav>
      <SheetTab $active>Feuil1</SheetTab>
      <SheetTab>Feuil2</SheetTab>
      <SheetTab>Feuil3</SheetTab>
      <AddSheet aria-label="Nouvelle feuille"><Svg w={23} h={23} stroke="#777" strokeWidth="1.300"><circle cx="11.500" cy="11.500" r="10.500" /><path d="M11.500 6v11M6 11.500h11" strokeWidth="2" /></Svg></AddSheet>
      <Spacer />
      <Dots><i /><i /><i /></Dots>
      <HScroll>
        <ScrollButton aria-label="Défiler à gauche"><Triangle d="M9 0v12L3 6z" /></ScrollButton>
        <Thumb $grow={666} />
        <Rest $grow={8} />
        <ScrollButton aria-label="Défiler à droite"><Triangle d="M3 0v12l6-6z" /></ScrollButton>
      </HScroll>
    </SheetBar>
    <StatusBar>
      <StatusText>Prêt</StatusText>
      <Accessibility>
        <Svg w={22} h={21} strokeWidth="1.800"><path d="M8 1C2 3 0 8 2 12s5 5 7 5" strokeDasharray="5 2" /><path d="M10 0v9M5 8l6 3 10-3M11 11l10 9M20 11L10 20" strokeWidth="2" /></Svg>
        Accessibilité : consultez nos recommandations
      </Accessibility>
      <Spacer />
      <ViewButton aria-label="Normal"><Svg w={19} h={19}><path d="M.5.500h18v18H.5zM.5 6.500h18M.5 12.500h18M6.500.500v18M12.500.500v18" /></Svg></ViewButton>
      <ViewButton aria-label="Mise en page"><Svg w={19} h={19}><path d="M.5.500h18v18H.5zM4.500 3.500h10v12h-10zM7 6.500h5M7 9.500h5M7 12.500h5" /></Svg></ViewButton>
      <ViewButton $active aria-label="Aperçu des sauts de page"><Svg w={19} h={19}><path d="M.5.500h18v18H.5zM.5 10.500h12V.500M6.500.500v10" /></Svg></ViewButton>
      <Zoom>
        <button aria-label="Zoom arrière"><Svg w={12} h={12}><path d="M0 6.500h12" /></Svg></button>
        <ZoomRange type="range" aria-label="Zoom" defaultValue={22} />
        <button aria-label="Zoom avant"><Svg w={12} h={12}><path d="M0 6.500h12M6.500 0v12" /></Svg></button>
        <Percent>50 %</Percent>
      </Zoom>
    </StatusBar>
  </>
);

const MostaqlMark = () => (
  <Watermark>
    <Svg w={232} h={74} strokeWidth="10" strokeLinecap="round">
      <path d="M23 32q-16 1-17 18 1 17 17 18 16-1 16-16V8M39 63h155" />
      <circle cx="77" cy="44" r="15" /><circle cx="208" cy="49" r="16" />
      <path d="M118 39l-2 22M140 39l-2 22M157 35l-3 26M173 33l-3 28" />
      <g fill="currentColor" stroke="none"><circle cx="69" cy="10" r="7" /><circle cx="86" cy="10" r="7" /><circle cx="110" cy="25" r="7" /><circle cx="126" cy="25" r="7" /></g>
    </Svg>
    mostaql.com
  </Watermark>
);

export default function App() {
  return (
    <Window>
      <GlobalStyle />
      <TitleArea />
      <RibbonArea />
      <FormulaArea />
      <SheetArea />
      <BottomArea />
      <MostaqlMark />
    </Window>
  );
}
